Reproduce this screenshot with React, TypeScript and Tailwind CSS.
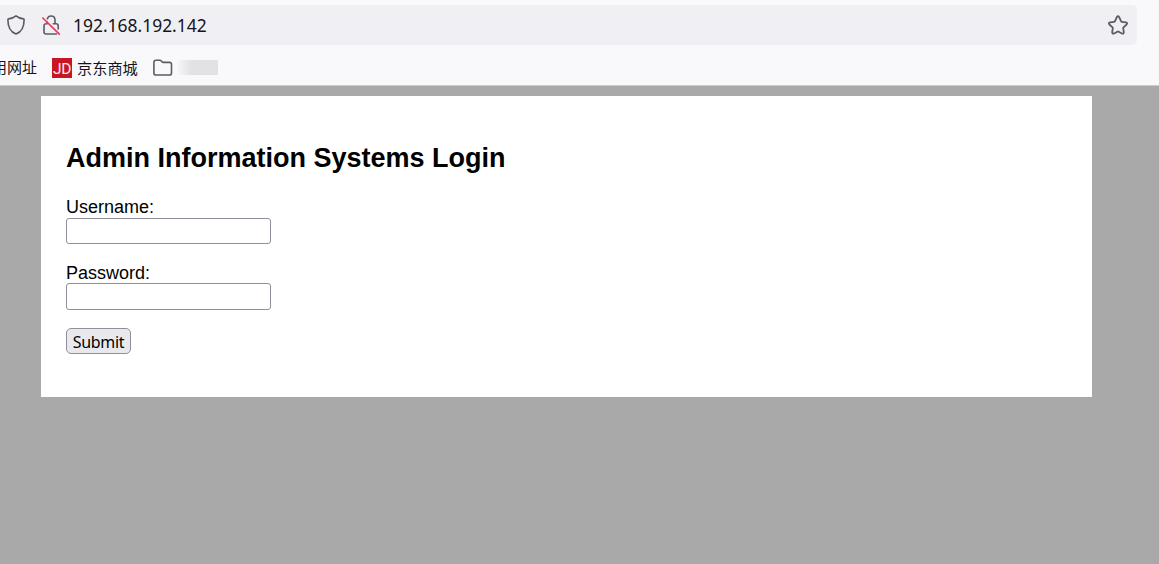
import { useState } from 'react';

const fields = [
  { id: 'username', label: 'Username:', type: 'text', leading: 'leading-[21px]', box: 'h-[26px]' },
  { id: 'password', label: 'Password:', type: 'password', leading: 'leading-[23px]', box: 'h-[27px]' },
];

function ShieldIcon() {
  return (
    <svg className="h-5 w-[18px] shrink-0" viewBox="0 0 18 20" fill="none" stroke="#5b5b66" strokeWidth="1.6" strokeLinejoin="round">
      <path d="M9 .9 C10.8 2.4 13.8 3.6 16.4 3.9 Q17.2 4 17.1 5 C17.1 11 15.4 16.6 9 19.1 C2.6 16.6 .9 11 .9 5 Q.8 4 1.6 3.9 C4.2 3.6 7.2 2.4 9 .9Z" />
    </svg>
  );
}

function InsecureIcon() {
  return (
    <svg className="h-5 w-[18px] shrink-0" viewBox="0 0 18 20" fill="none" stroke="#5b5b66" strokeWidth="1.6" strokeLinecap="round">
      <path d="M5.3 3.8 C5.9 1.9 7.4 1 9 1 C11.3 1 13 2.7 13 5.2 V8.7 M11.3 8.7 H14 Q16.2 8.7 16.2 10.9 V14" />
      <path d="M5 6.9 V8.7 H4.2 Q2 8.7 2 10.9 V17 Q2 19 4.2 19 H14.4" />
      <path d="M.8 3 L17.5 19.3" stroke="#ec3c64" strokeWidth="1.7" />
    </svg>
  );
}

function StarIcon() {
  return (
    <svg className="h-5 w-[22px] shrink-0" viewBox="0 0 22 20" fill="none" stroke="#5b5b66" strokeWidth="1.8" strokeLinejoin="round">
      <path d="M9.8 2.2 Q11 .3 12.2 2.2 L14 6.2 Q14.2 6.7 14.8 6.8 L18.9 7.4 Q21 7.8 19.6 9.5 L16.5 12.3 Q16.1 12.7 16.2 13.3 L16.8 17.1 Q16.9 19.3 14.9 18.5 L11.7 16.7 Q11 16.3 10.3 16.7 L7.1 18.5 Q5.1 19.3 5.2 17.1 L5.8 13.3 Q5.9 12.7 5.5 12.3 L2.4 9.5 Q1 7.8 3.1 7.4 L7.2 6.8 Q7.8 6.7 8 6.2Z" />
    </svg>
  );
}

function FolderIcon() {
  return (
    <svg className="h-[18px] w-5 shrink-0" viewBox="0 0 20 18" fill="none" stroke="#5b5b66" strokeWidth="1.6" strokeLinejoin="round">
      <path d="M3 1.3 H6.9 Q7.6 1.3 8.1 1.8 L9.1 2.9 Q9.6 3.4 10.4 3.4 H16.4 Q18.5 3.4 18.5 5.5 V13.9 Q18.5 16 16.4 16 H3 Q.9 16 .9 13.9 V3.4 Q.9 1.3 3 1.3Z" />
    </svg>
  );
}

function BrowserBar() {
  return (
    <header className="h-[86px] overflow-hidden border-b border-[#cccccc] bg-[#f9f9fb] pt-[5px] text-[#15141a]">
      <div className="mr-[22px] flex h-10 items-center rounded-r-[5px] bg-[#f0f0f4] pl-[7px] pr-[8.5px]">
        <ShieldIcon />
        <div className="ml-[17px]">
          <InsecureIcon />
        </div>
        <span className="ml-[13px] flex-1 font-['Noto_Sans',sans-serif] text-[17.45px] leading-10">192.168.192.142</span>
        <StarIcon />
      </div>
      <nav className="flex h-[45px] items-center font-['Noto_Sans_CJK_SC',sans-serif] text-[15px]">
        <span className="-ml-[8px] whitespace-nowrap">用网址</span>
        <span className="ml-[15px] flex h-5 w-5 items-center justify-center bg-[#c81623] pt-[2px] font-['Roboto',sans-serif] text-[15.5px] leading-5 tracking-[-0.3px] text-[#fbe8ea]">JD</span>
        <span className="mb-[2px] ml-[5px] whitespace-nowrap text-[15.2px] leading-[22px]">京东商城</span>
        <span className="ml-[15px]">
          <FolderIcon />
        </span>
        <span className="ml-[5px] h-[15px] w-10 bg-linear-to-r from-[#f5f5f7] via-[#e2e2e4] via-35% to-[#e2e2e4]" />
      </nav>
    </header>
  );
}

export default function App() {
  const [values, setValues] = useState<Record<string, string>>({ username: '', password: '' });

  return (
    <div className="h-[564px] overflow-hidden bg-[#a9a9a9] font-['Liberation_Sans',Arial,sans-serif] text-black">
      <BrowserBar />
      <main className="ml-[41px] mt-[10px] h-[301px] w-[1051px] bg-white px-[25px] pt-[46px]">
        <h1 className="mb-[23px] text-[27px] font-bold leading-8">Admin Information Systems Login</h1>
        <form onSubmit={e => e.preventDefault()}>
          {fields.map(field => (
            <div key={field.id} className="mb-[18px]">
              <label htmlFor={field.id} className={`block h-[21px] text-[18px] ${field.leading}`}>{field.label}</label>
              <input
                id={field.id}
                type={field.type}
                value={values[field.id]}
                onChange={e => setValues({ ...values, [field.id]: e.target.value })}
                className={`block w-[205px] rounded-[3px] border border-[#8f8f9d] bg-white px-1 ${field.box}`}
              />
            </div>
          ))}
          <button
            type="submit"
            className="flex h-[26px] w-[65px] items-center justify-center rounded-[5px] border border-[#8f8f9d] bg-[#e9e9ed] pt-px font-['Noto_Sans',sans-serif] text-[16px] tracking-[-0.3px]"
          >
            Submit
          </button>
        </form>
      </main>
    </div>
  );
}
